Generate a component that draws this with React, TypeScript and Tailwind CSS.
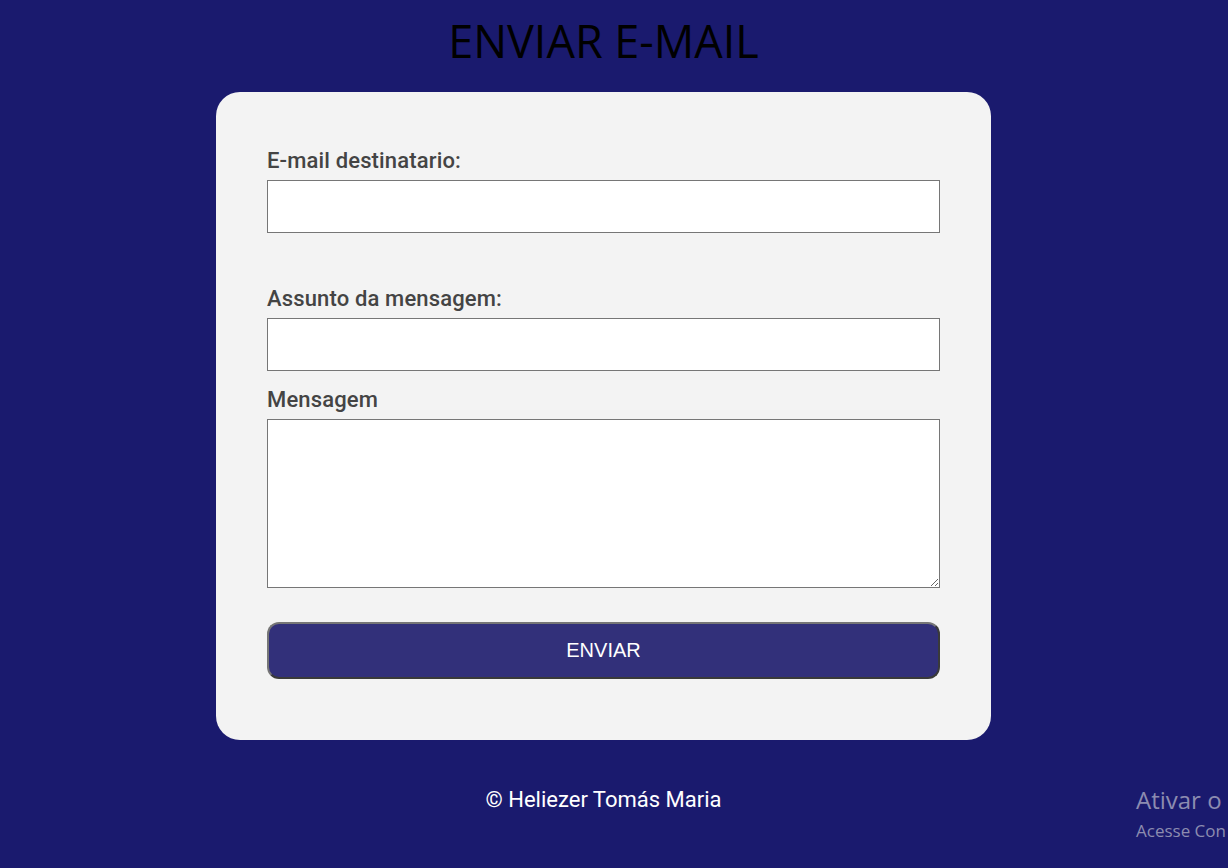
import React from "react";

export default function App() {
  return (
    <div className="relative min-h-[868px] w-full overflow-hidden bg-[#1a1a6e]">
      <div className="flex w-[1207px] flex-col items-center">
        <h1
          className="mt-[10px] mb-[21px] text-[45px] font-normal leading-[61px] text-black"
          style={{ fontFamily: '"Open Sans", sans-serif' }}
        >
          ENVIAR E-MAIL
        </h1>
        <form
          className="flex h-[648px] w-[775px] flex-col rounded-[24px] bg-[#f3f3f3] px-[51px] pt-[56px]"
          style={{ fontFamily: 'Roboto, sans-serif' }}
          onSubmit={(e) => e.preventDefault()}
        >
          <label className="mb-[6px] block h-[26px] text-[22px] font-medium leading-[26px] tracking-[0.15px] text-[#444]">
            E-mail destinatario:
          </label>
          <input
            type="email"
            className="block h-[53px] w-full border border-[#767676] bg-white outline-none"
          />
          <label className="mt-[53px] mb-[6px] block h-[26px] text-[22px] font-medium leading-[26px] tracking-[0.15px] text-[#444]">
            Assunto da mensagem:
          </label>
          <input
            type="text"
            className="block h-[53px] w-full border border-[#767676] bg-white outline-none"
          />
          <label className="mt-[16px] mb-[6px] block h-[26px] text-[22px] font-medium leading-[26px] tracking-[0.15px] text-[#444]">
            Mensagem
          </label>
          <textarea className="block h-[169px] w-full resize-y border border-[#767676] bg-white outline-none" />
          <button
            type="submit"
            className="mt-[34px] h-[57px] w-full rounded-[12px] border-2 border-t-[#767676] border-l-[#767676] border-r-[#3a3a3a] border-b-[#3a3a3a] bg-[#32307a] pb-[2px] text-[20px] text-white"
            style={{ fontFamily: '"Liberation Sans", Arial, sans-serif' }}
          >
            ENVIAR
          </button>
        </form>
        <p
          className="mt-[47px] text-[22px] leading-[26px] text-white"
          style={{ fontFamily: 'Roboto, sans-serif' }}
        >
          © Heliezer Tomás Maria
        </p>
      </div>
      <div
        className="absolute left-[1136px] top-[784px] whitespace-nowrap text-[#8c8cb0]"
        style={{ fontFamily: '"Open Sans", sans-serif' }}
      >
        <div className="text-[24px] leading-[32px]">Ativar o</div>
        <div className="mt-[3px] text-[17px] leading-[24px]">Acesse Con</div>
      </div>
    </div>
  );
}
